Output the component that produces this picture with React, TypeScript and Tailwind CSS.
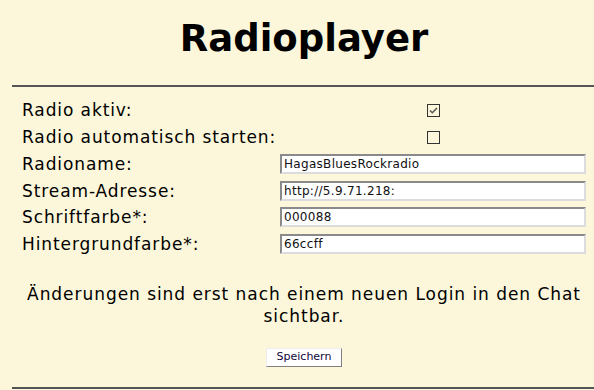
import React from "react";

const rows = [
  { label: "Radio aktiv:", kind: "check", checked: true },
  { label: "Radio automatisch starten:", kind: "check", checked: false },
  { label: "Radioname:", kind: "input", value: "HagasBluesRockradio" },
  { label: "Stream-Adresse:", kind: "input", value: "http://5.9.71.218:" },
  { label: "Schriftfarbe*:", kind: "input", value: "000088" },
  { label: "Hintergrundfarbe*:", kind: "input", value: "66ccff" },
];

function Check({ checked }: { checked: boolean }) {
  return (
    <div className="w-[13px] h-[13px] border border-[#333] flex items-center justify-center">
      {checked && (
        <svg width="11" height="11" viewBox="0 0 11 11">
          <path d="M2 5.5 L4.3 7.8 L9 3" fill="none" stroke="#555" strokeWidth="1.5" />
        </svg>
      )}
    </div>
  );
}

export default function App() {
  return (
    <div className="w-[594px] h-[390px] bg-[#fcf7da] overflow-hidden font-['DejaVu_Sans',sans-serif] text-black">
      <div className="ml-[12px] w-[584px] pt-[18px]">
        <h1 className="text-[37px] leading-[42px] font-bold text-center">Radioplayer</h1>
      </div>
      <div className="ml-[12px] mt-[25px] h-[2px] bg-[#555]" />
      <div className="mt-[10px] ml-[22px] w-[564px] flex flex-col">
        {rows.map((r) => (
          <div key={r.label} className="h-[26.75px] flex items-center">
            <div className="w-[258px] text-[17px] leading-[20px] tracking-[0.9px] whitespace-nowrap">{r.label}</div>
            <div className="flex-1 flex items-center justify-center">
              {r.kind === "check" ? (
                <Check checked={!!r.checked} />
              ) : (
                <div className="w-full h-[20px] bg-white border-2 border-t-[#8a8a8a] border-l-[#8a8a8a] border-b-[#dcdcdc] border-r-[#dcdcdc] flex items-center pl-[2px] text-[12px] tracking-[0.3px] text-[#111]">
                  {r.value}
                </div>
              )}
            </div>
          </div>
        ))}
      </div>
      <p className="ml-[12px] w-[584px] mt-[25px] text-center text-[17px] leading-[22.5px] tracking-[0.95px]">
        Änderungen sind erst nach einem neuen Login in den Chat sichtbar.
      </p>
      <div className="ml-[12px] w-[584px] mt-[20.5px] flex justify-center">
        <div className="w-[76px] h-[19px] bg-white border border-t-[#eeeeee] border-l-[#eeeeee] border-b-[#808080] border-r-[#808080] flex items-center justify-center text-[11px] text-[#10083a]">
          Speichern
        </div>
      </div>
      <div className="ml-[12px] mt-[20px] h-[2px] bg-[#555]" />
    </div>
  );
}
